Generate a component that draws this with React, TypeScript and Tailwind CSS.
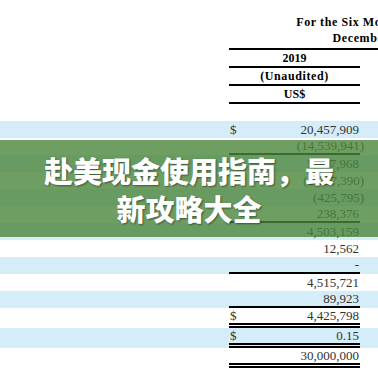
import React from "react";

type Row = {
  value: string;
  dollar?: boolean;
  neg?: boolean;
  line?: "single" | "double";
};

const rows: Row[] = [
  { value: "20,457,909", dollar: true },
  { value: "(14,539,941)", neg: true, line: "single" },
  { value: "5,917,968" },
  { value: "(1,227,390)", neg: true },
  { value: "(425,795)", neg: true },
  { value: "238,376", line: "single" },
  { value: "4,503,159" },
  { value: "12,562" },
  { value: "-", line: "single" },
  { value: "4,515,721" },
  { value: "89,923", line: "single" },
  { value: "4,425,798", dollar: true, line: "double" },
  { value: "0.15", dollar: true, line: "double" },
  { value: "30,000,000", line: "double" },
];

const App = () => {
  return (
    <div className="relative w-[378px] h-[378px] overflow-hidden bg-white font-['Liberation_Serif',serif] text-black">
      {/* column header */}
      <div className="pt-[14px] pl-[229px]">
        <div className="w-[284px] text-center font-bold text-[12px] leading-[16px] tracking-[0.6px] whitespace-nowrap">
          <div>For the Six Months Ended</div>
          <div>December 31,</div>
        </div>
        <div className="mt-[2px] h-[2px] bg-black" />
        <div className="w-[131px] text-center font-bold text-[12px]">
          <div className="h-[18px] flex items-center justify-center border-b-2 border-black">2019</div>
          <div className="h-[18px] flex items-center justify-center border-b-2 border-black tracking-[0.6px]">(Unaudited)</div>
          <div className="h-[18px] flex items-center justify-center border-b-2 border-black">US$</div>
        </div>
      </div>

      {/* figures */}
      <div className="mt-[17px] flex flex-col">
        {rows.map((r, i) => (
          <div
            key={i}
            className={`flex ${r.line === "double" ? "h-[20px]" : "h-[17px]"} ${i % 2 === 0 ? "bg-[#d4edf9]" : "bg-white"}`}
          >
            <div className="w-[229px] shrink-0" />
            <div
              className={`w-[131px] shrink-0 flex items-center justify-between text-[13px] leading-none text-[#333] border-black ${
                r.line === "single" ? "border-b-2" : r.line === "double" ? "border-b-[5px] border-double" : ""
              }`}
            >
              <span className="pl-[1px]">{r.dollar ? "$" : ""}</span>
              <span className={r.neg ? "-mr-[4px]" : "pr-[1px]"}>{r.value}</span>
            </div>
          </div>
        ))}
      </div>

      {/* title banner */}
      <div className="absolute left-0 right-0 top-[140px] h-[97px] bg-[#4b863b]/80 flex flex-col items-center justify-center">
        <div className="font-['Noto_Sans_CJK_SC',sans-serif] font-black text-white text-[29px] leading-[38px] text-center [text-shadow:1px_1px_2px_rgba(0,0,0,0.45)]">
          <div>赴美现金使用指南，最</div>
          <div>新攻略大全</div>
        </div>
      </div>
    </div>
  );
};

export default App;
